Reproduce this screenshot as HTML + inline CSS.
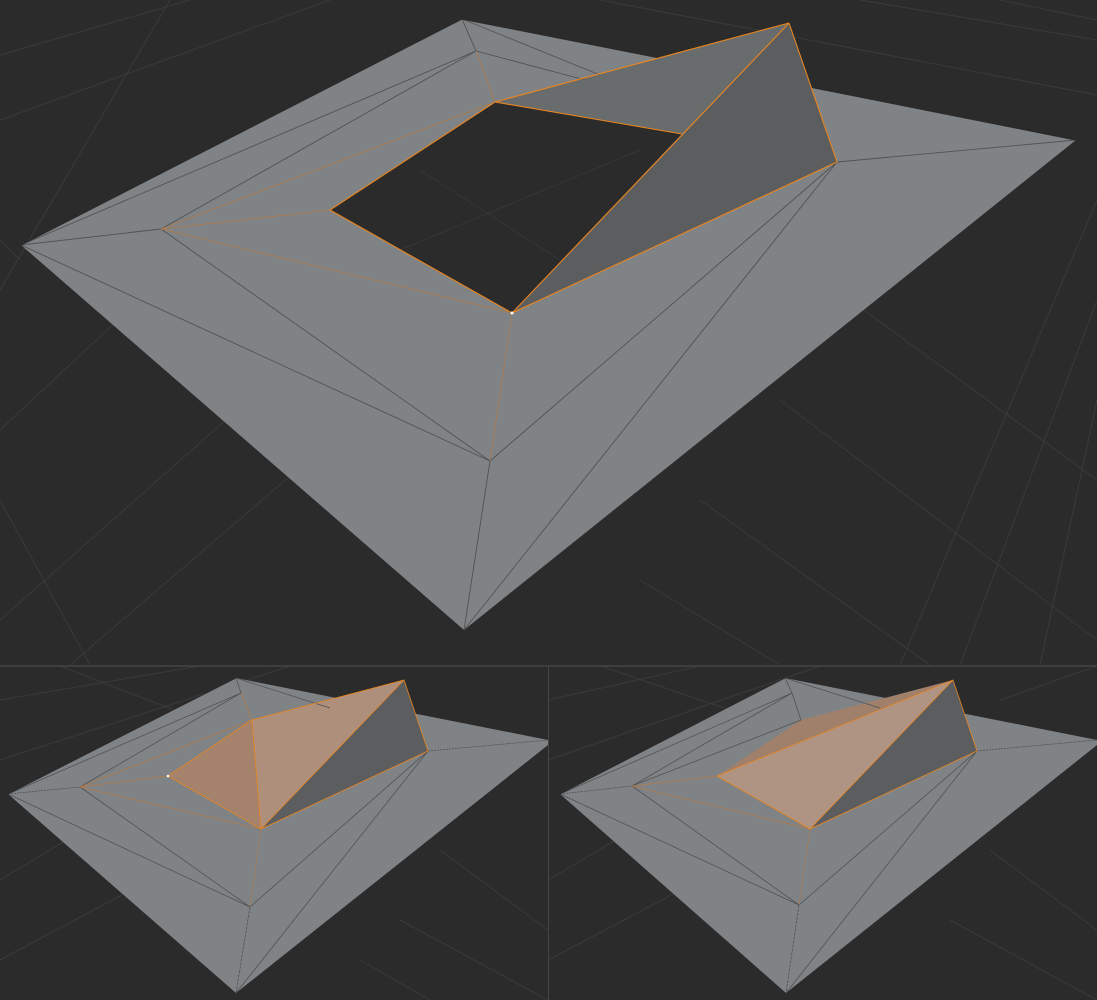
<!DOCTYPE html>
<html><head><meta charset="utf-8"><style>
html,body{margin:0;padding:0;background:#2b2b2b;}
svg{display:block}
</style></head><body>
<svg width="1097" height="1000" viewBox="0 0 1097 1000" xmlns="http://www.w3.org/2000/svg">
<rect width="1097" height="1000" fill="#2b2b2b"/>
<g stroke="#3a3a3a" stroke-width="1" fill="none">
<line x1="0" y1="55" x2="190" y2="0"/><line x1="0" y1="120" x2="330" y2="0"/>
<line x1="0" y1="290" x2="170" y2="0"/><line x1="0" y1="430" x2="300" y2="150"/>
<line x1="0" y1="620" x2="440" y2="230"/><line x1="70" y1="665" x2="460" y2="330"/>
<line x1="600" y1="0" x2="1097" y2="95"/><line x1="860" y1="0" x2="1097" y2="40"/>
<line x1="1000" y1="0" x2="1097" y2="20"/>
<line x1="850" y1="300" x2="1097" y2="480"/><line x1="780" y1="400" x2="1097" y2="640"/>
<line x1="700" y1="500" x2="930" y2="665"/><line x1="640" y1="580" x2="780" y2="665"/>
<line x1="0" y1="500" x2="90" y2="665"/><line x1="20" y1="260" x2="0" y2="240"/>
<line x1="1097" y1="200" x2="900" y2="665"/><line x1="1097" y1="400" x2="1040" y2="665"/>
<line x1="1097" y1="300" x2="960" y2="665"/>
<line x1="0" y1="700" x2="200" y2="666"/><line x1="0" y1="760" x2="290" y2="666"/>
<line x1="60" y1="666" x2="200" y2="720"/><line x1="0" y1="880" x2="100" y2="820"/>
<line x1="0" y1="960" x2="150" y2="880"/><line x1="400" y1="920" x2="548" y2="1000"/>
<line x1="360" y1="960" x2="430" y2="1000"/><line x1="440" y1="850" x2="548" y2="930"/>
<line x1="548" y1="700" x2="700" y2="666"/><line x1="548" y1="760" x2="820" y2="666"/>
<line x1="600" y1="666" x2="760" y2="720"/><line x1="548" y1="880" x2="650" y2="820"/>
<line x1="548" y1="960" x2="700" y2="880"/><line x1="950" y1="920" x2="1097" y2="1000"/>
<line x1="990" y1="850" x2="1097" y2="930"/><line x1="1000" y1="700" x2="1097" y2="666"/>
</g>
<line x1="0" y1="666" x2="1097" y2="666" stroke="#454545" stroke-width="1.5"/>
<line x1="548.5" y1="666" x2="548.5" y2="1000" stroke="#454545" stroke-width="1"/>

<g>
<polygon points="21,245 462,19 1076,140 464,630" fill="#808385"/>
<polygon points="330,210 495,102 682,134 512,313" fill="#2b2b2b"/>
<g stroke="#363636" stroke-width="1"><line x1="400" y1="250" x2="640" y2="150"/><line x1="420" y1="170" x2="560" y2="260"/></g>
<polygon points="495,102 789,23 682,134" fill="#696c6d"/>
<polygon points="789,23 837,162 512,313" fill="#5c5d5f"/>
<g stroke="#505254" stroke-width="0.9" fill="none">
<line x1="462" y1="19" x2="476" y2="51"/><line x1="462" y1="19" x2="600" y2="75"/>
<line x1="476" y1="51" x2="585" y2="80"/>
<line x1="21" y1="245" x2="476" y2="51"/><line x1="161" y1="229" x2="476" y2="51"/>
<line x1="21" y1="245" x2="161" y2="229"/><line x1="21" y1="245" x2="490" y2="461"/>
<line x1="161" y1="229" x2="490" y2="461"/><line x1="490" y1="461" x2="464" y2="630"/>
<line x1="490" y1="461" x2="837" y2="162"/><line x1="837" y1="162" x2="464" y2="630"/>
<line x1="837" y1="162" x2="1076" y2="140"/>
</g>
<g stroke="#2a2a2a" stroke-width="1.2" fill="none">
<line x1="21" y1="245" x2="462" y2="19"/><line x1="462" y1="19" x2="660" y2="58"/>
<line x1="815" y1="88" x2="1076" y2="140"/>
</g>
<g stroke="#e9851f" stroke-width="1.1" fill="none">
<polyline points="330,210 495,102 682,134"/><polyline points="330,210 512,313"/>
<line x1="161" y1="229" x2="330" y2="210" stroke="#b07a4a" stroke-width="0.8"/>
<line x1="161" y1="229" x2="495" y2="102" stroke="#b07a4a" stroke-width="0.8"/>
<line x1="161" y1="229" x2="512" y2="313" stroke="#b07a4a" stroke-width="0.8"/>
<line x1="476" y1="51" x2="495" y2="102" stroke="#b07a4a" stroke-width="0.8"/>
<line x1="495" y1="102" x2="789" y2="23"/>
<line x1="789" y1="23" x2="512" y2="313"/><line x1="789" y1="23" x2="837" y2="162"/>
<line x1="512" y1="313" x2="837" y2="162"/>
<line x1="512" y1="313" x2="490" y2="461" stroke="#b07a4a" stroke-width="0.7"/>
</g>
<circle cx="512" cy="313" r="1.5" fill="#fff"/>
</g>

<g>
<polygon points="8,794 236,678 548,740 548,745 236,993" fill="#808385"/>
<polygon points="168,776 252,720 261,829" fill="#a4826c"/>
<polygon points="252,720 404,680 261,829" fill="#ae8f7c"/>
<polygon points="404,680 428,751 261,829" fill="#5c5d5f"/>
<g stroke="#505254" stroke-width="0.8" fill="none">
<line x1="236" y1="678" x2="241" y2="693"/><line x1="236" y1="678" x2="330" y2="708"/>
<line x1="8" y1="794" x2="241" y2="693"/><line x1="80" y1="787" x2="241" y2="693"/>
<line x1="8" y1="794" x2="80" y2="787" stroke-dasharray="2,1"/>
<line x1="8" y1="794" x2="250" y2="907"/><line x1="80" y1="787" x2="250" y2="907"/>
<line x1="250" y1="907" x2="236" y2="993" stroke-dasharray="3,1"/>
<line x1="250" y1="907" x2="428" y2="751"/><line x1="428" y1="751" x2="236" y2="993"/>
<line x1="428" y1="751" x2="548" y2="740" stroke-dasharray="2,1"/>
<line x1="8" y1="794" x2="236" y2="678" stroke="#2a2a2a"/>
</g>
<g stroke="#e9851f" stroke-width="0.8" fill="none">
<line x1="80" y1="787" x2="168" y2="776" stroke="#b07a4a"/><line x1="80" y1="787" x2="252" y2="720" stroke="#b07a4a"/>
<line x1="80" y1="787" x2="261" y2="829" stroke="#b07a4a"/><line x1="241" y1="693" x2="252" y2="720" stroke="#b07a4a"/>
<polyline points="168,776 252,720 404,680 428,751 261,829 168,776"/>
<line x1="252" y1="720" x2="261" y2="829"/><line x1="404" y1="680" x2="261" y2="829"/>
<line x1="261" y1="829" x2="250" y2="907" stroke="#b07a4a" stroke-width="0.6"/>
</g>
<circle cx="168" cy="776" r="1.3" fill="#fff"/>
</g>

<g>
<polygon points="560,794 785,678 1097,740 1097,745 786,993" fill="#808385"/>
<polygon points="717,776 801,720 953,680" fill="#a0806b"/>
<polygon points="717,776 953,680 810,829" fill="#b09483"/>
<polygon points="953,680 977,751 810,829" fill="#5c5d5f"/>
<g stroke="#505254" stroke-width="0.8" fill="none">
<line x1="785" y1="678" x2="792" y2="693"/><line x1="785" y1="678" x2="880" y2="708"/>
<line x1="560" y1="794" x2="792" y2="693"/><line x1="632" y1="786" x2="792" y2="693"/>
<line x1="560" y1="794" x2="632" y2="786" stroke-dasharray="2,1"/>
<line x1="560" y1="794" x2="799" y2="905"/><line x1="632" y1="786" x2="799" y2="905"/>
<line x1="799" y1="905" x2="786" y2="993" stroke-dasharray="3,1"/>
<line x1="799" y1="905" x2="977" y2="751"/><line x1="977" y1="751" x2="786" y2="993"/>
<line x1="977" y1="751" x2="1097" y2="740" stroke-dasharray="2,1"/>
<line x1="792" y1="693" x2="801" y2="720"/><line x1="632" y1="786" x2="801" y2="720"/>
<line x1="560" y1="794" x2="785" y2="678" stroke="#2a2a2a"/>
</g>
<g stroke="#e9851f" stroke-width="0.8" fill="none">
<line x1="632" y1="786" x2="717" y2="776" stroke="#b07a4a"/><line x1="632" y1="786" x2="810" y2="829" stroke="#b07a4a"/>
<polyline points="717,776 953,680 977,751 810,829 717,776"/>
<line x1="953" y1="680" x2="810" y2="829"/>
<line x1="810" y1="829" x2="799" y2="905" stroke="#b07a4a" stroke-width="0.6"/>
</g>
</g>
</svg>
</body></html>
